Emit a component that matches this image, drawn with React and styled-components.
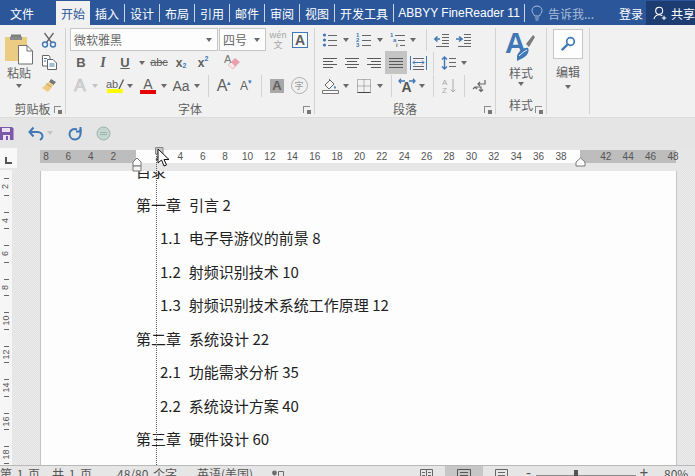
import React from 'react';
import styled, { createGlobalStyle } from 'styled-components';

const CJK = '"Noto Sans CJK SC", "Liberation Sans", sans-serif';
const LATIN = '"Liberation Sans", "Noto Sans CJK SC", sans-serif';
const BLUE = '#2b579a';
const ICON_BLUE = '#3f78b5';
const INK = '#5f5f5f';

const GlobalStyle = createGlobalStyle`
  html, body { margin: 0; padding: 0; background: #fff; }
  body { font-family: ${CJK}; }
`;

const Window = styled.div`
  position: relative;
  width: 695px;
  height: 476px;
  overflow: hidden;
  display: flex;
  flex-direction: column;
  background: #e6e6e6;
`;

/* ---- tab bar ---- */
const TabBar = styled.div`
  height: 25px;
  flex: none;
  display: flex;
  align-items: stretch;
  padding-top: 1px;
  box-sizing: border-box;
  background: ${BLUE};
  color: #fff;
  font-size: 12px;
`;

const Tab = styled.div`
  display: flex;
  align-items: center;
  justify-content: center;
  width: ${p => p.$w}px;
  margin-left: ${p => p.$ml || 0}px;
  white-space: nowrap;
  background: ${p => (p.$active ? '#f1f1f1' : 'transparent')};
  color: ${p => (p.$active ? '#2b579a' : '#fff')};
  font-family: ${p => (p.$latin ? LATIN : CJK)};
`;

const TabSep = styled.i`
  width: 1px;
  margin: 3px 0 3px;
  background: #c9d6e8;
`;

const Tell = styled.div`
  display: flex;
  align-items: center;
  gap: 5px;
  width: 88px;
  padding-left: 6px;
  color: #a9bdd9;
`;

const Share = styled.div`
  margin-left: auto;
  width: 49px;
  display: flex;
  align-items: center;
  gap: 3px;
  padding-left: 7px;
  box-sizing: border-box;
  background: #1d3d72;
  white-space: nowrap;
`;

/* ---- ribbon ---- */
const Ribbon = styled.div`
  height: 93px;
  flex: none;
  display: flex;
  box-sizing: border-box;
  padding: 3px 0 3px;
  background: #f1f1f1;
  border-bottom: 1px solid #dcdcdc;
  color: ${INK};
  font-size: 12px;
`;

const Group = styled.section`
  position: relative;
  width: ${p => p.$w}px;
  flex: none;
  box-sizing: border-box;
  display: flex;
  flex-direction: column;
  border-right: 1px solid #d2d2d2;
`;

const GroupBody = styled.div`
  height: 69px;
  display: flex;
  flex-direction: column;
  padding-left: ${p => p.$pl || 0}px;
`;

const GroupLabel = styled.div`
  flex: 1;
  text-align: center;
  line-height: 18px;
  padding-top: 3px;
  white-space: nowrap;
`;

const Launcher = styled.i`
  position: absolute;
  right: 4px;
  bottom: 1px;
  width: 6px;
  height: 6px;
  border-left: 1px solid #8a8a8a;
  border-top: 1px solid #8a8a8a;
  &::after {
    content: '';
    position: absolute;
    right: -1px;
    bottom: -1px;
    width: 4px;
    height: 4px;
    background: #777;
  }
`;

const ToolRow = styled.div`
  height: 23px;
  display: flex;
  align-items: center;
`;

const Tool = styled.span`
  width: ${p => p.$w || 22}px;
  height: 23px;
  margin-left: ${p => p.$ml || 0}px;
  flex: none;
  display: flex;
  align-items: center;
  justify-content: center;
  background: ${p => (p.$on ? '#c4c4c4' : 'transparent')};
`;

const Caret = styled.span`
  width: ${p => p.$w || 10}px;
  flex: none;
  display: flex;
  justify-content: center;
  margin-top: ${p => p.$mt || 0}px;
  &::before {
    content: '';
    border-left: 3.5px solid transparent;
    border-right: 3.5px solid transparent;
    border-top: 4px solid ${p => (p.$dim ? '#c4c4c4' : '#6a6a6a')};
  }
`;

const VSep = styled.i`
  width: 1px;
  height: 22px;
  flex: none;
  margin-left: ${p => p.$ml || 0}px;
  background: #d2d2d2;
`;

const Combo = styled.div`
  width: ${p => p.$w}px;
  height: 23px;
  flex: none;
  box-sizing: border-box;
  display: flex;
  align-items: center;
  justify-content: space-between;
  padding: 0 5px 0 3px;
  margin-right: 1px;
  background: #fdfdfd;
  border: 1px solid #c6c6c6;
  color: #666;
`;

const Glyph = styled.span`
  font-family: ${p => (p.$serif ? '"Liberation Serif", serif' : LATIN)};
  font-size: ${p => p.$size || 13}px;
  font-weight: ${p => (p.$bold ? 700 : 400)};
  font-style: ${p => (p.$italic ? 'italic' : 'normal')};
  text-decoration: ${p => p.$deco || 'none'};
  color: ${p => p.$color || INK};
  -webkit-text-stroke: ${p => p.$stroke || '0'};
  line-height: 1;
  display: inline-flex;
  align-items: baseline;
  white-space: nowrap;
`;

const Script = styled.span`
  font-size: 7px;
  color: ${ICON_BLUE};
  position: relative;
  top: ${p => (p.$up ? -6 : 1)}px;
`;

const UnderBar = styled.span`
  display: flex;
  flex-direction: column;
  align-items: center;
  line-height: 1;
  &::after {
    content: '';
    width: 16px;
    height: 4px;
    margin-top: -1px;
    background: ${p => p.$color};
  }
`;

const PenRow = styled.span`
  display: flex;
  align-items: flex-end;
`;

const GrayChip = styled.span`
  width: 14px;
  height: 14px;
  display: flex;
  align-items: center;
  justify-content: center;
  background: #a8a8a8;
`;

const BoxedA = styled.span`
  width: 16px;
  height: 16px;
  box-sizing: border-box;
  display: flex;
  align-items: center;
  justify-content: center;
  border: 1px solid ${ICON_BLUE};
  background: #fafafa;
`;

const Circled = styled.span`
  width: 15px;
  height: 15px;
  border: 1px solid #b0b0b0;
  border-radius: 50%;
  display: flex;
  align-items: center;
  justify-content: center;
  font-size: 9px;
  color: #9a9a9a;
`;

const Wen = styled.span`
  display: flex;
  flex-direction: column;
  align-items: center;
  line-height: 10px;
  font-size: 9px;
  color: #a5a5a5;
`;

const StackedTool = styled.div`
  display: flex;
  flex-direction: column;
  align-items: center;
  padding-top: ${p => p.$pt || 0}px;
  line-height: 16px;
  gap: ${p => p.$gap || 0}px;
`;

const SmallColumn = styled.div`
  display: flex;
  flex-direction: column;
`;

const ClipRow = styled.div`
  display: flex;
`;

const PasteCol = styled.div`
  width: 38px;
  flex: none;
  display: flex;
  flex-direction: column;
  align-items: center;
  padding-top: 5px;
  line-height: 16px;
`;

const EditBox = styled.div`
  width: 30px;
  height: 30px;
  box-sizing: border-box;
  display: flex;
  align-items: center;
  justify-content: center;
  background: #fdfdfd;
  border: 1px solid #c6c6c6;
`;

/* ---- quick access ---- */
const QuickBar = styled.div`
  height: 30px;
  flex: none;
  display: flex;
  align-items: center;
  background: #e5e5e5;
`;

const QuickTool = styled.span`
  display: flex;
  margin-left: ${p => p.$ml || 0}px;
`;

/* ---- rulers ---- */
const RulerRow = styled.div`
  height: 22px;
  flex: none;
  display: flex;
  background: #e6e6e6;
`;

const TabStop = styled.div`
  width: 17px;
  height: 20px;
  display: flex;
  align-items: flex-end;
  justify-content: center;
  padding-bottom: 4px;
  box-sizing: border-box;
  background: #f8f8f8;
`;

const TabStopMark = styled.i`
  width: 5px;
  height: 5px;
  border-left: 2px solid #555;
  border-bottom: 2px solid #555;
`;

const HRuler = styled.div`
  width: 636px;
  height: 13px;
  margin: 2px 0 0 23px;
  display: flex;
  background: linear-gradient(
    90deg,
    #bdbdbd 0 96px,
    #fdfdfd 96px 540px,
    #bdbdbd 540px 100%
  );
`;

const RulerCells = styled.div`
  display: flex;
  margin-left: -5.2px;
`;

const RulerNum = styled.span`
  width: 22.4px;
  flex: none;
  text-align: center;
  font: 10px/13px ${LATIN};
  color: #555;
`;

const Workspace = styled.div`
  flex: 1;
  min-height: 0;
  display: flex;
  background: repeating-conic-gradient(#e2e2e2 0 25%, #ebebeb 0 50%) 0 0 / 2px 2px;
`;

const VRuler = styled.div`
  width: 12px;
  flex: none;
  display: flex;
  flex-direction: column;
  background: #f6f6f6;
`;

const VCell = styled.div`
  height: 33.5px;
  flex: none;
  box-sizing: border-box;
  padding: 8px 0;
  display: flex;
  flex-direction: column;
  justify-content: space-between;
  align-items: center;
  &::before, &::after {
    content: '';
    width: 5px;
    height: 1px;
    background: #666;
  }
`;

const VNum = styled.span`
  transform: rotate(-90deg);
  font: 9px/9px ${LATIN};
  color: #555;
  white-space: nowrap;
`;

const PageSheet = styled.main`
  width: 637px;
  margin: 1px 0 0 28px;
  height: 294px;
  flex: none;
  box-sizing: border-box;
  overflow: hidden;
  background: #fdfdfd;
  border-left: 1px solid #c4c4c4;
  border-right: 1px solid #c4c4c4;
`;

const TocList = styled.div`
  margin-top: -17px;
  color: #222;
  font-size: 15px;
`;

const TocLine = styled.div`
  height: 33.5px;
  display: flex;
  align-items: center;
  gap: 8px;
  padding-left: ${p => (p.$sub ? 119 : 95)}px;
  white-space: nowrap;
`;

/* ---- status bar ---- */
const StatusBar = styled.footer`
  height: 11px;
  flex: none;
  box-sizing: border-box;
  overflow: hidden;
  display: flex;
  align-items: flex-start;
  background: #e6e6e6;
  border-top: 1px solid #b8b8b8;
  color: #555;
  font-size: 12px;
  line-height: 16px;
`;

const StatusText = styled.span`
  width: ${p => p.$w}px;
  flex: none;
  margin-left: ${p => p.$ml || 0}px;
  white-space: nowrap;
  word-spacing: 2px;
`;

const ViewBtn = styled.span`
  width: 38px;
  height: 12px;
  flex: none;
  display: flex;
  justify-content: center;
  padding-top: 3px;
  box-sizing: border-box;
  background: ${p => (p.$on ? '#c6c6c6' : 'transparent')};
`;

const ZoomTrack = styled.span`
  position: relative;
  width: 100px;
  height: 1px;
  flex: none;
  margin-top: 9px;
  background: #8c8c8c;
  &::after {
    content: '';
    position: absolute;
    left: 38px;
    top: -5px;
    width: 4px;
    height: 8px;
    background: #555;
  }
`;

const ZoomSign = styled.span`
  width: ${p => p.$w}px;
  flex: none;
  margin-top: ${p => p.$mt || 0}px;
  text-align: center;
  font: 15px/12px ${LATIN};
`;

/* ---- things over the ruler ---- */
const Guide = styled.i`
  position: absolute;
  left: 156px;
  top: 150px;
  height: 315px;
  border-left: 1px dotted #555;
`;

const Overlay = styled.svg`
  position: absolute;
  left: ${p => p.$x}px;
  top: ${p => p.$y}px;
`;

/* ---- icons ---- */
const Ic = ({ w = 16, h = 16, children }) => (
  <svg width={w} height={h} viewBox={`0 0 ${w} ${h}`} fill="none">{children}</svg>
);

const lines = (rows, x1, x2, color = '#666') =>
  rows.map(y => <path key={y} d={`M${x1} ${y}.5H${x2}`} stroke={color} />);

const AlignIcon = ({ kind }) => {
  const rows = {
    left: [[1, 15], [1, 11], [1, 15], [1, 11]],
    center: [[1, 15], [3, 13], [1, 15], [3, 13]],
    right: [[1, 15], [5, 15], [1, 15], [5, 15]],
    justify: [[1, 15], [1, 15], [1, 15], [1, 15]],
  }[kind];
  return (
    <Ic>
      {rows.map(([a, b], i) => <path key={i} d={`M${a} ${3 + i * 3}.5H${b}`} stroke="#5a5a5a" />)}
    </Ic>
  );
};

const Bullets = () => (
  <Ic>
    {[3, 8, 13].map(y => <circle key={y} cx="2.5" cy={y} r="1.6" fill={ICON_BLUE} />)}
    {lines([3, 8, 13], 6, 15)}
  </Ic>
);

const Numbered = () => (
  <Ic>
    {[['1', 5], ['2', 10], ['3', 15]].map(([n, y]) => (
      <text key={n} x="0" y={y} fontSize="6" fontWeight="700" fontFamily="Liberation Sans" fill={ICON_BLUE}>{n}</text>
    ))}
    {lines([3, 8, 13], 6, 15)}
  </Ic>
);

const Multilevel = () => (
  <Ic>
    <text x="0" y="5" fontSize="6" fontWeight="700" fontFamily="Liberation Sans" fill={ICON_BLUE}>1</text>
    <text x="3" y="10" fontSize="6" fontWeight="700" fontFamily="Liberation Sans" fill={ICON_BLUE}>a</text>
    <text x="6" y="15" fontSize="6" fontWeight="700" fontFamily="Liberation Sans" fill="#666">i</text>
    <path d="M5 3.5H15M8 8.5H15M10 13.5H15" stroke="#666" />
  </Ic>
);

const Outdent = ({ flip }) => (
  <Ic>
    <path d="M8 2.5H15M8 5.5H15M8 8.5H15M8 11.5H15M2 14.5H15" stroke="#666" />
    <path d={flip ? 'M0 7H5M3 4.5L6 7L3 9.5' : 'M6 7H1M3.5 4.5L.8 7L3.5 9.5'} stroke={ICON_BLUE} strokeWidth="1.6" />
  </Ic>
);

const Distributed = () => (
  <Ic w={17}>
    <path d="M.5 1V15M16.5 1V15" stroke={ICON_BLUE} />
    <path d="M3 3.5H14M3 11.5H14M3 14.5H14" stroke="#666" />
    <path d="M3 7.5H14M5 5.5L3 7.5L5 9.5M12 5.5L14 7.5L12 9.5" stroke={ICON_BLUE} />
  </Ic>
);

const LineSpacing = () => (
  <Ic>
    <path d="M3.5 2V14M1 4.5L3.5 2L6 4.5M1 11.5L3.5 14L6 11.5" stroke={ICON_BLUE} strokeWidth="1.4" />
    <path d="M8 3.5H15M8 7.5H15M8 11.5H15" stroke="#666" />
  </Ic>
);

const Shading = () => (
  <Ic w={17}>
    <path d="M3 7L8 2L12 6L7 11Z" fill="#fafafa" stroke="#666" />
    <path d="M7 1L9 3" stroke="#666" />
    <path d="M12.5 7.5C14 9 14.5 10 13.2 10.8C12 10.6 12 9 12.5 7.5Z" fill={ICON_BLUE} />
    <path d="M.5 12.5H16.5V15.5H.5Z" fill="#fafafa" stroke="#777" />
  </Ic>
);

const Borders = () => (
  <Ic w={14} h={14}>
    <path d="M.5 .5H13.5V13.5H.5ZM7 .5V13.5M.5 7H13.5" stroke="#777" strokeDasharray="1 1" />
    <path d="M.5 13.5H13.5" stroke="#444" />
  </Ic>
);

const SwapA = () => (
  <Ic w={18} h={17}>
    <text x="3.5" y="15" fontSize="14" fontWeight="700" fontFamily="Liberation Sans" fill="#555">A</text>
    <path d="M1 4H7M3 1.8L1 4L3 6.2M17 4H11M15 1.8L17 4L15 6.2" stroke={ICON_BLUE} strokeWidth="1.3" />
  </Ic>
);

const SortAZ = () => (
  <Ic w={15} h={17}>
    <text x="0" y="8" fontSize="8" fontFamily="Liberation Sans" fill="#a8a8a8">A</text>
    <text x="0" y="16" fontSize="8" fontFamily="Liberation Sans" fill="#a8a8a8">Z</text>
    <path d="M11 2V15M8.5 12.5L11 15L13.5 12.5" stroke="#aaa" />
  </Ic>
);

const ParaMark = () => (
  <Ic>
    <path d="M13 2V6H6M8 4L6 6L8 8" stroke="#666" strokeWidth="1.2" />
    <path d="M3 9H9V13M1 11L3 9L5 11M7 11.5L9 13.5L11 11.5" stroke="#666" strokeWidth="1.2" />
  </Ic>
);

const Eraser = () => (
  <Ic w={20} h={20}>
    <path d="M5 12L12 5L17 9L10 16Z" fill="#eaa0ad" />
    <path d="M5 12L8 9L12 13L10 16Z" fill="#fbe9ec" stroke="#e6a9b4" strokeWidth=".6" />
    <text x="1" y="10" fontSize="11" fontFamily="Liberation Sans" fill="#777">A</text>
  </Ic>
);

const Pen = () => (
  <Ic w={6} h={11}>
    <path d="M5.5 .5L1 10" stroke="#555" strokeWidth="1.3" />
  </Ic>
);

const Paste = () => (
  <svg width="30" height="32" viewBox="0 0 30 32" fill="none">
    <path d="M1 4H23V28H1Z" fill="#eccb82" />
    <path d="M7 4H17V1.5H7Z" fill="#7a7a7a" />
    <path d="M6 3.5H18V7H6Z" fill="#8a8a8a" />
    <path d="M14.5 12.5H23L28.5 18V31H14.5Z" fill="#fff" stroke="#6f6f6f" />
    <path d="M23 12.5V18H28.5" stroke="#6f6f6f" />
  </svg>
);

const Scissors = () => (
  <Ic w={16} h={16}>
    <path d="M3.5 1L10.5 10.5M12.5 1L5.5 10.5" stroke="#666" strokeWidth="1.3" />
    <circle cx="4" cy="12.5" r="2.5" stroke={ICON_BLUE} strokeWidth="1.4" />
    <circle cx="12" cy="12.5" r="2.5" stroke={ICON_BLUE} strokeWidth="1.4" />
  </Ic>
);

const CopyDoc = () => (
  <Ic w={15} h={15}>
    <path d="M.5 .5H7L8 2V11H.5Z" fill="#fff" stroke="#666" />
    <path d="M5.5 4.5H11L14.5 8V14.5H5.5Z" fill="#fff" stroke="#666" />
    <path d="M2 3.5H5M2 6H4M7.5 9H12.5M7.5 11H12.5" stroke={ICON_BLUE} />
  </Ic>
);

const FormatBrush = () => (
  <Ic w={16} h={15}>
    <path d="M10 1L15 4L12.5 7L8 4Z" fill="#777" />
    <path d="M8 4L12.5 7L7 14L1 10Z" fill="#eccb82" />
    <path d="M5 5.5L10 9" stroke="#c9a35a" />
  </Ic>
);

const StyleBrush = () => (
  <svg width="32" height="34" viewBox="0 0 32 34" fill="none">
    <text x="0" y="23" fontSize="29" fontWeight="700" fontFamily="Liberation Sans" fill={ICON_BLUE}>A</text>
    <path d="M21 14L28 5L30 7L24 17Z" fill="#7b7b7b" />
    <path d="M12 26C14 20 20 17 23 18C25 21 22 27 16 29L12 31Z" fill={ICON_BLUE} />
    <path d="M14 26C17 23 20 21 22 20" stroke="#f1f1f1" />
  </svg>
);

const Magnifier = () => (
  <Ic w={16} h={16}>
    <circle cx="10.5" cy="5.5" r="3.8" stroke={ICON_BLUE} strokeWidth="1.7" />
    <path d="M7.5 8.5L1.8 14.2" stroke={ICON_BLUE} strokeWidth="2.4" />
  </Ic>
);

const Bulb = () => (
  <Ic w={12} h={17}>
    <path d="M3.5 11C3 9 1 8 1 5.5C1 3 3 1 6 1C9 1 11 3 11 5.5C11 8 9 9 8.5 11Z" stroke="#a9bdd9" />
    <path d="M4 13H8M4.5 15H7.5" stroke="#a9bdd9" />
  </Ic>
);

const UserPlus = () => (
  <Ic w={17} h={17}>
    <circle cx="7" cy="5.5" r="4" stroke="#fff" strokeWidth="1.2" />
    <path d="M1 15C2 11.5 4 10 7 10C8.5 10 9.5 10.4 10.5 11" stroke="#fff" strokeWidth="1.2" />
    <path d="M12.5 11V16M10 13.5H15" stroke="#fff" strokeWidth="1.2" />
  </Ic>
);

const SaveIcon = () => (
  <Ic w={14} h={15}>
    <path d="M0 1H12L13.5 2.5V14H0Z" fill="#7d58a8" />
    <path d="M2 2H10V6H2Z" fill="#e9e2f2" />
    <path d="M3 9H10V14H3Z" fill="#e9e2f2" />
    <path d="M6 10H8V14H6Z" fill="#7d58a8" />
  </Ic>
);

const UndoIcon = () => (
  <Ic w={16} h={15}>
    <path d="M2 6H9.5C12.5 6 14.5 8 14.5 10.5C14.5 12 13.5 13 12 14" stroke="#3f78b5" strokeWidth="2" />
    <path d="M5.5 1.5L1.5 6L5.5 10.5" stroke="#3f78b5" strokeWidth="2" />
  </Ic>
);

const RedoIcon = () => (
  <Ic w={14} h={15}>
    <path d="M9 3.5C5 2 1.5 4.5 1.5 8C1.5 11 3.8 13.5 7 13.5C10 13.5 12.5 11 12.5 8V3" stroke="#3f78b5" strokeWidth="2" />
    <path d="M12.5 1V5.5H8" stroke="#3f78b5" strokeWidth="2" />
  </Ic>
);

const TouchIcon = () => (
  <Ic w={15} h={15}>
    <circle cx="7.5" cy="7.5" r="6.5" fill="#c3d6d0" stroke="#9fb3ad" />
    <path d="M4 6.5H11M4 8.5H11" stroke="#9fb3ad" />
  </Ic>
);

const ReadView = () => (
  <Ic w={13} h={14}>
    <path d="M.5 .5H12.5V13.5H.5ZM6.5 .5V13.5M2 3.5H5M8 3.5H11M2 6.5H5M8 6.5H11" stroke="#666" />
  </Ic>
);

const PrintView = () => (
  <Ic w={14} h={14}>
    <path d="M.5 .5H13.5V13.5H.5ZM3 3.5H11M3 6.5H11M3 9.5H11" stroke="#555" />
  </Ic>
);

const WebView = () => (
  <Ic w={14} h={14}>
    <path d="M.5 .5H12.5V13.5H.5ZM3 3.5H10M3 6.5H10" stroke="#666" />
    <circle cx="11" cy="11" r="3" fill="#666" />
  </Ic>
);

const MacroDot = () => (
  <Ic w={12} h={9}>
    <circle cx="2.5" cy="3" r="2.4" fill="#6c6c6c" />
    <path d="M6.5 1.5H11.5V8.5H6.5Z" stroke="#6c6c6c" />
  </Ic>
);

/* ---- data ---- */
const tabs = [
  ['设计', 34], ['布局', 34], ['引用', 34], ['邮件', 34], ['审阅', 34], ['视图', 34], ['开发工具', 58],
];

const rulerNumbers = [8, 6, 4, 2, '', 2, 4, 6, 8, 10, 12, 14, 16, 18, 20, 22, 24, 26, 28, 30, 32, 34, 36, 38, '', 42, 44, 46, 48];
const vNumbers = [2, 4, 6, 8, 10, 12, 14, 16, 18];

const toc = [
  { id: 0, text: ['目录'] },
  { id: 1, text: ['第一章', '引言 2'] },
  { id: 2, sub: true, text: ['1.1', '电子导游仪的前景 8'] },
  { id: 3, sub: true, text: ['1.2', '射频识别技术 10'] },
  { id: 4, sub: true, text: ['1.3', '射频识别技术系统工作原理 12'] },
  { id: 5, text: ['第二章', '系统设计 22'] },
  { id: 6, sub: true, text: ['2.1', '功能需求分析 35'] },
  { id: 7, sub: true, text: ['2.2', '系统设计方案 40'] },
  { id: 8, text: ['第三章', '硬件设计 60'] },
];

export default function App() {
  return (
    <>
      <GlobalStyle />
      <Window>
        <TabBar>
          <Tab $w={44}>文件</Tab>
          <Tab $w={34} $ml={12} $active>开始</Tab>
          <Tab $w={34}>插入</Tab>
          {tabs.map(([name, w]) => (
            <React.Fragment key={name}>
              <TabSep />
              <Tab $w={w}>{name}</Tab>
            </React.Fragment>
          ))}
          <TabSep />
          <Tab $w={130} $latin>ABBYY FineReader 11</Tab>
          <TabSep />
          <Tell><Bulb /><span>告诉我...</span></Tell>
          <Tab $w={24}>登录</Tab>
          <Share><UserPlus /><span>共享</span></Share>
        </TabBar>

        <Ribbon>
          <Group $w={66}>
            <GroupBody>
              <ClipRow>
                <PasteCol>
                  <Paste />
                  <span>粘贴</span>
                  <Caret $w={20} $mt={3} />
                </PasteCol>
                <SmallColumn>
                  <Tool><Scissors /></Tool>
                  <Tool><CopyDoc /></Tool>
                  <Tool><FormatBrush /></Tool>
                </SmallColumn>
              </ClipRow>
            </GroupBody>
            <GroupLabel>剪贴板</GroupLabel>
            <Launcher />
          </Group>

          <Group $w={249}>
            <GroupBody $pl={4}>
              <ToolRow>
                <Combo $w={148}><span>微软雅黑</span><Caret $w={7} /></Combo>
                <Combo $w={47}><span>四号</span><Caret $w={7} /></Combo>
                <Tool><Wen><span>wén</span><span>文</span></Wen></Tool>
                <Tool><BoxedA><Glyph $bold $size={14}>A</Glyph></BoxedA></Tool>
              </ToolRow>
              <ToolRow>
                <Tool><Glyph $bold $size={13}>B</Glyph></Tool>
                <Tool><Glyph $italic $serif $bold $size={14}>I</Glyph></Tool>
                <Tool><Glyph $bold $deco="underline" $size={13}>U</Glyph></Tool>
                <Caret $w={12} />
                <Tool><Glyph $deco="line-through" $size={11}>abc</Glyph></Tool>
                <Tool><Glyph $bold $size={12}>x<Script>2</Script></Glyph></Tool>
                <Tool><Glyph $bold $size={12}>x<Script $up>2</Script></Glyph></Tool>
                <Tool $ml={8}><Eraser /></Tool>
              </ToolRow>
              <ToolRow>
                <Tool $w={20}><Glyph $size={17} $color="#fafafa" $stroke="0.7px #b5b5b5">A</Glyph></Tool>
                <Caret $dim />
                <Tool $ml={4}>
                  <UnderBar $color="#ffff00">
                    <PenRow><Glyph $size={11}>ab</Glyph><Pen /></PenRow>
                  </UnderBar>
                </Tool>
                <Caret $w={8} />
                <Tool $ml={3}><UnderBar $color="#e60000"><Glyph $size={14}>A</Glyph></UnderBar></Tool>
                <Caret />
                <Tool $w={24}><Glyph $size={14}>Aa</Glyph></Tool>
                <Caret $w={8} />
                <VSep $ml={7} />
                <Tool $ml={4}><Glyph $size={16}>A<Script $up>▴</Script></Glyph></Tool>
                <Tool><Glyph $size={12}>A<Script $up>▾</Script></Glyph></Tool>
                <VSep $ml={4} />
                <Tool $ml={4}><GrayChip><Glyph $bold $size={13}>A</Glyph></GrayChip></Tool>
                <Tool><Circled>字</Circled></Tool>
              </ToolRow>
            </GroupBody>
            <GroupLabel>字体</GroupLabel>
            <Launcher />
          </Group>

          <Group $w={181}>
            <GroupBody $pl={4}>
              <ToolRow>
                <Tool><Bullets /></Tool>
                <Caret />
                <Tool $ml={2}><Numbered /></Tool>
                <Caret />
                <Tool $ml={2}><Multilevel /></Tool>
                <Caret $w={8} />
                <VSep $ml={9} />
                <Tool $ml={4}><Outdent /></Tool>
                <Tool><Outdent flip /></Tool>
              </ToolRow>
              <ToolRow>
                <Tool><AlignIcon kind="left" /></Tool>
                <Tool><AlignIcon kind="center" /></Tool>
                <Tool><AlignIcon kind="right" /></Tool>
                <Tool $on><AlignIcon kind="justify" /></Tool>
                <Tool><Distributed /></Tool>
                <VSep $ml={4} />
                <Tool $ml={4}><LineSpacing /></Tool>
                <Caret $w={8} />
              </ToolRow>
              <ToolRow>
                <Tool><Shading /></Tool>
                <Caret />
                <Tool $ml={2}><Borders /></Tool>
                <Caret />
                <VSep $ml={6} />
                <Tool $ml={4}><SwapA /></Tool>
                <Caret $w={8} />
                <VSep $ml={7} />
                <Tool $ml={4}><SortAZ /></Tool>
                <VSep $ml={4} />
                <Tool $ml={4}><ParaMark /></Tool>
              </ToolRow>
            </GroupBody>
            <GroupLabel>段落</GroupLabel>
            <Launcher />
          </Group>

          <Group $w={51}>
            <GroupBody>
              <StackedTool $pt={2} $gap={1}>
                <StyleBrush />
                <span>样式</span>
                <Caret $w={50} />
              </StackedTool>
            </GroupBody>
            <GroupLabel>样式</GroupLabel>
            <Launcher />
          </Group>

          <Group $w={43}>
            <GroupBody>
              <StackedTool $pt={1} $gap={5}>
                <EditBox><Magnifier /></EditBox>
                <span>编辑</span>
                <Caret $w={42} />
              </StackedTool>
            </GroupBody>
          </Group>
        </Ribbon>

        <QuickBar>
          <QuickTool><SaveIcon /></QuickTool>
          <QuickTool $ml={14}><UndoIcon /></QuickTool>
          <Caret $w={12} $dim />
          <QuickTool $ml={12}><RedoIcon /></QuickTool>
          <QuickTool $ml={14}><TouchIcon /></QuickTool>
        </QuickBar>

        <RulerRow>
          <TabStop><TabStopMark /></TabStop>
          <HRuler>
            <RulerCells>
              {rulerNumbers.map((n, i) => <RulerNum key={i}>{n}</RulerNum>)}
            </RulerCells>
          </HRuler>
        </RulerRow>

        <Workspace>
          <VRuler>
            {vNumbers.map(n => <VCell key={n}><VNum>{n}</VNum></VCell>)}
          </VRuler>
          <PageSheet>
            <TocList>
              {toc.map(row => (
                <TocLine key={row.id} $sub={row.sub}>
                  {row.text.map(t => <span key={t}>{t}</span>)}
                </TocLine>
              ))}
            </TocList>
          </PageSheet>
        </Workspace>

        <StatusBar>
          <StatusText $w={52}>第 1 页，</StatusText>
          <StatusText $w={65}>共 1 页</StatusText>
          <StatusText $w={80}>48/80 个字</StatusText>
          <StatusText $w={75}>英语(美国)</StatusText>
          <StatusText $w={135}><MacroDot /></StatusText>
          <ViewBtn><ReadView /></ViewBtn>
          <ViewBtn $on><PrintView /></ViewBtn>
          <ViewBtn><WebView /></ViewBtn>
          <ZoomSign $w={15} $mt={1}>-</ZoomSign>
          <ZoomTrack />
          <ZoomSign $w={16}>+</ZoomSign>
          <StatusText $w={30} $ml={12}>80%</StatusText>
        </StatusBar>

        <Guide />
        <Overlay $x={132} $y={157} width="10" height="15" viewBox="0 0 10 15" fill="none">
          <path d="M5 1L9 5V9H1V5Z" fill="#fff" stroke="#777" />
          <path d="M1 9H9V14H1Z" fill="#f4f4f4" stroke="#777" />
        </Overlay>
        <Overlay $x={575} $y={157} width="11" height="10" viewBox="0 0 11 10" fill="none">
          <path d="M5.5 1L10 5V9H1V5Z" fill="#fff" stroke="#777" />
        </Overlay>
        <Overlay $x={154} $y={146} width="18" height="22" viewBox="0 0 18 22" fill="none">
          <path d="M1.5 1.5H9V8H1.5Z" fill="#c8c8c8" stroke="#888" />
          <path d="M4 3V17L7.5 14L10 20L12.5 19L10 13.5H15Z" fill="#fff" stroke="#111" strokeLinejoin="round" />
        </Overlay>
      </Window>
    </>
  );
}
